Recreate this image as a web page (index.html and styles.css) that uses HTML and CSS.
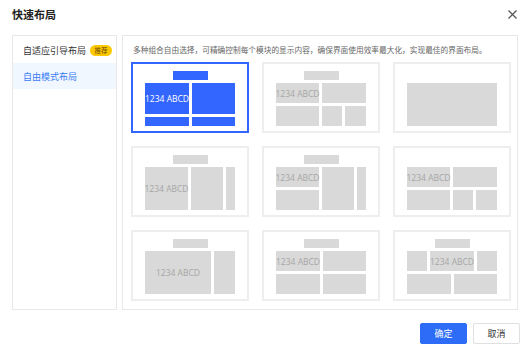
FILE: index.html
```html
<!DOCTYPE html>
<html lang="zh-CN">

<head>
    <meta charset="UTF-8">
    <title>快速布局</title>
    <link rel="stylesheet" href="styles.css">
</head>

<body>
    <div class="dialog">
        <div class="dialog-header">
            <span class="dialog-title">快速布局</span>
            <button class="btn-close">
                <svg width="9" height="9" viewBox="0 0 9 9">
                    <path d="M0.5 0.5 L8.5 8.5 M8.5 0.5 L0.5 8.5" stroke="#555" stroke-width="1.2" fill="none" />
                </svg>
            </button>
        </div>

        <div class="dialog-body">
            <ul class="menu">
                <li class="menu-item">自适应引导布局<span class="tag">推荐</span></li>
                <li class="menu-item active">自由模式布局</li>
            </ul>

            <div class="panel">
                <p class="desc">多种组合自由选择，可精确控制每个模块的显示内容，确保界面使用效率最大化，实现最佳的界面布局。</p>
                <div class="layouts">
                    <div class="layout selected">
                        <div class="head"></div>
                        <div class="blocks l1">
                            <div class="b a"><span>1234 ABCD</span></div>
                            <div class="b b2"></div>
                            <div class="b c"></div>
                            <div class="b d"></div>
                        </div>
                    </div>
                    <div class="layout">
                        <div class="head"></div>
                        <div class="blocks l2">
                            <div class="b a"><span>1234 ABCD</span></div>
                            <div class="b b2"></div>
                            <div class="b c"></div>
                            <div class="b d"></div>
                            <div class="b e"></div>
                        </div>
                    </div>
                    <div class="layout">
                        <div class="head hidden"></div>
                        <div class="blocks l3">
                            <div class="b a"></div>
                        </div>
                    </div>

                    <div class="layout">
                        <div class="head"></div>
                        <div class="blocks l4">
                            <div class="b a"><span>1234 ABCD</span></div>
                            <div class="b b2"></div>
                            <div class="b c"></div>
                        </div>
                    </div>
                    <div class="layout">
                        <div class="head"></div>
                        <div class="blocks l5">
                            <div class="b a"><span>1234 ABCD</span></div>
                            <div class="b b2"></div>
                            <div class="b c"></div>
                            <div class="b d"></div>
                        </div>
                    </div>
                    <div class="layout">
                        <div class="head hidden"></div>
                        <div class="blocks l2">
                            <div class="b a"><span>1234 ABCD</span></div>
                            <div class="b b2"></div>
                            <div class="b c"></div>
                            <div class="b d"></div>
                            <div class="b e"></div>
                        </div>
                    </div>

                    <div class="layout">
                        <div class="head"></div>
                        <div class="blocks l7">
                            <div class="b a"><span>1234 ABCD</span></div>
                            <div class="b b2"></div>
                        </div>
                    </div>
                    <div class="layout">
                        <div class="head"></div>
                        <div class="blocks l8">
                            <div class="b a"><span>1234 ABCD</span></div>
                            <div class="b b2"></div>
                            <div class="b c"></div>
                            <div class="b d"></div>
                        </div>
                    </div>
                    <div class="layout">
                        <div class="head"></div>
                        <div class="blocks l9">
                            <div class="b a"></div>
                            <div class="b b2"><span>1234 ABCD</span></div>
                            <div class="b c"></div>
                            <div class="b d"></div>
                            <div class="b e"></div>
                        </div>
                    </div>
                </div>
            </div>
        </div>

        <div class="dialog-footer">
            <button class="btn btn-primary">确定</button>
            <button class="btn">取消</button>
        </div>
    </div>
</body>

</html>
```

FILE: styles.css
```css
html,
body {
    margin: 0;
    padding: 0;
    background: #fff;
}

body {
    font-family: "Noto Sans CJK SC", "Noto Sans", sans-serif;
    color: #333;
}

.dialog {
    width: 529px;
    height: 351px;
    display: flex;
    flex-direction: column;
}

.dialog-header {
    height: 28px;
    padding: 0 11px 0 12px;
    display: flex;
    align-items: center;
    justify-content: space-between;
}

.dialog-title {
    font-size: 11px;
    font-weight: 700;
    color: #222;
}

.btn-close {
    width: 12px;
    height: 12px;
    padding: 0;
    border: none;
    background: none;
    display: flex;
    align-items: center;
    justify-content: center;
    cursor: pointer;
}

.dialog-body {
    margin-top: 7px;
    padding: 0 11px 0 12px;
    display: flex;
    gap: 5px;
    height: 275px;
}

.menu {
    width: 103px;
    margin: 0;
    padding: 1px 0 0;
    list-style: none;
    border: 1px solid #e8e8e8;
}

.menu-item {
    height: 26px;
    padding-left: 10px;
    display: flex;
    align-items: center;
    font-size: 9px;
    color: #333;
    cursor: pointer;
}

.menu-item.active {
    background: #f0f7ff;
    color: #3b7cf5;
}

.tag {
    margin-left: 4px;
    width: 22px;
    height: 11px;
    border-radius: 6px;
    background: #fcc800;
    color: #6b4a00;
    font-size: 6.5px;
    display: flex;
    align-items: center;
    justify-content: center;
}

.panel {
    flex: 1;
    border: 1px solid #e8e8e8;
    padding: 0 6px 8px 8px;
}

.desc {
    margin: 0;
    height: 26px;
    padding-left: 2px;
    display: flex;
    align-items: center;
    font-size: 7.7px;
    color: #666;
    white-space: nowrap;
}

.layouts {
    display: grid;
    grid-template-columns: repeat(3, 118px);
    grid-auto-rows: 71px;
    column-gap: 13px;
    row-gap: 13px;
}

.layout {
    border: 2px solid #eeeeee;
    padding: 7px 12px 0;
    cursor: pointer;
}

.layout.selected {
    border-color: #3366ff;
}

.head {
    width: 35px;
    height: 9px;
    margin: 0 auto 3px;
    background: #d9d9d9;
}

.head.hidden {
    visibility: hidden;
}

.blocks {
    display: grid;
    gap: 3px;
    grid-template-rows: 20px 20px;
}

.b {
    background: #d9d9d9;
    display: flex;
    align-items: center;
    justify-content: center;
    overflow: visible;
}

.b span {
    font-family: "Open Sans", sans-serif;
    font-size: 8.5px;
    color: #a6a6a6;
    white-space: nowrap;
}

.selected .head,
.selected .b {
    background: #3366ff;
}

.selected .b span {
    color: #fff;
}

.a { grid-area: a; }
.b2 { grid-area: b; }
.c { grid-area: c; }
.d { grid-area: d; }
.e { grid-area: e; }

.l1 {
    grid-template-columns: 1fr 1fr;
    grid-template-rows: 31px 9px;
    grid-template-areas: "a b" "c d";
}

.l2 {
    grid-template-columns: 43px 20px 21px;
    grid-template-areas: "a b b" "c d e";
}

.l3 {
    grid-template-columns: 1fr;
    grid-template-rows: 43px;
    grid-template-areas: "a";
}

.l4 {
    grid-template-columns: 43px 32px 9px;
    grid-template-rows: 43px;
    grid-template-areas: "a b c";
}

.l5 {
    grid-template-columns: 43px 32px 9px;
    grid-template-areas: "a c d" "b c d";
}

.l7 {
    grid-template-columns: 66px 21px;
    grid-template-rows: 43px;
    grid-template-areas: "a b";
}

.l8 {
    grid-template-columns: 1fr 1fr;
    grid-template-areas: "a b" "c d";
}

.l9 {
    grid-template-columns: repeat(4, 1fr);
    grid-template-areas: "a b b c" "d d e e";
}

.dialog-footer {
    margin-top: 13px;
    padding-right: 9px;
    display: flex;
    justify-content: flex-end;
    gap: 6px;
}

.btn {
    width: 47px;
    height: 21px;
    padding: 0;
    border: 1px solid #e0e0e0;
    border-radius: 2px;
    background: #fff;
    font-family: "Noto Sans CJK SC", sans-serif;
    font-size: 9px;
    color: #333;
    cursor: pointer;
}

.btn-primary {
    background: #2d6cf6;
    border-color: #2d6cf6;
    color: #fff;
}
```
